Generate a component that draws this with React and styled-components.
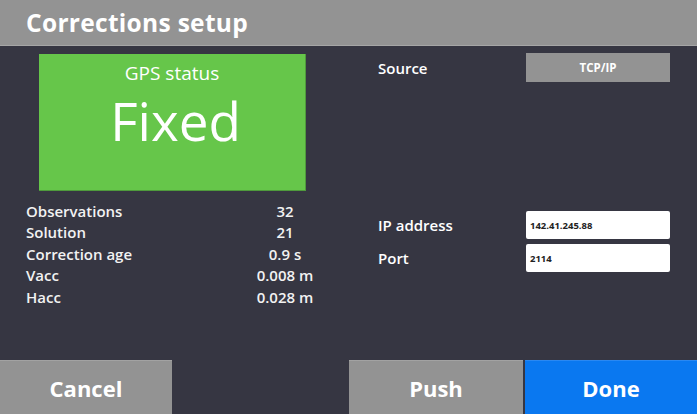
import styled, { createGlobalStyle } from "styled-components";

const GlobalStyle = createGlobalStyle`
  body {
    margin: 0;
    background: #363642;
    font-family: "Open Sans", "Noto Sans", Arial, sans-serif;
  }
`;

const Screen = styled.div`
  width: 697px;
  height: 414px;
  display: flex;
  flex-direction: column;
  background: #363642;
  color: #ffffff;
  overflow: hidden;
`;

const Header = styled.header`
  height: 45px;
  border-bottom: 1px solid #a6a6a6;
  background: #939393;
  display: flex;
  align-items: center;
  padding-left: 26px;
  font-size: 24.5px;
  font-weight: 700;
  letter-spacing: 0.3px;
`;

const Main = styled.main`
  flex: 1;
  display: flex;
`;

const LeftColumn = styled.section`
  width: 349px;
  display: flex;
  flex-direction: column;
`;

const StatusBox = styled.div`
  margin: 8px 0 0 39px;
  width: 266px;
  height: 136px;
  background: #66c64a;
  border-right: 1px solid #4f9a3c;
  border-bottom: 1px solid #4f9a3c;
  display: flex;
  flex-direction: column;
  align-items: center;
`;

const StatusTitle = styled.div`
  margin-top: 8px;
  font-size: 19px;
  line-height: 22px;
`;

const StatusValue = styled.div`
  font-size: 53px;
  line-height: 58px;
  margin-top: 8px;
  padding-left: 7px;
`;

const Stats = styled.div`
  margin: 9px 0 0 26px;
  display: grid;
  grid-template-columns: 224px 70px;
  grid-auto-rows: 21.5px;
  align-items: center;
  font-size: 15px;
  font-weight: 600;
  color: #f2f2f2;
`;

const StatValue = styled.span`
  text-align: center;
`;

const RightColumn = styled.section`
  flex: 1;
  display: flex;
  flex-direction: column;
  padding: 7px 0 0 29px;
`;

const FieldRow = styled.div`
  display: grid;
  grid-template-columns: 148px 144px;
  align-items: center;
  margin-top: ${(p) => p.$gap || 0}px;
`;

const Label = styled.span`
  font-size: 15px;
  font-weight: 600;
`;

const SourceButton = styled.div`
  height: 29px;
  background: #939393;
  display: flex;
  align-items: center;
  justify-content: center;
  font-size: 11.5px;
  font-weight: 700;
`;

const Input = styled.div`
  height: 28px;
  background: #ffffff;
  border-radius: 2px;
  display: flex;
  align-items: center;
  padding-left: 4px;
  color: #222;
  font-size: 9.5px;
  font-weight: 700;
`;

const Footer = styled.footer`
  height: 54px;
  display: flex;
`;

const FooterButton = styled.div`
  width: ${(p) => p.$width}px;
  margin-left: ${(p) => p.$offset || 0}px;
  background: ${(p) => (p.$primary ? "#0a78f0" : "#939393")};
  border-top: 1px solid ${(p) => (p.$primary ? "#2a88f2" : "#a2a2a2")};
  display: flex;
  align-items: center;
  justify-content: center;
  font-size: 22px;
  font-weight: 700;
`;

const stats = [
  ["Observations", "32"],
  ["Solution", "21"],
  ["Correction age", "0.9 s"],
  ["Vacc", "0.008 m"],
  ["Hacc", "0.028 m"],
];

export default function App() {
  return (
    <Screen>
      <GlobalStyle />
      <Header>Corrections setup</Header>
      <Main>
        <LeftColumn>
          <StatusBox>
            <StatusTitle>GPS status</StatusTitle>
            <StatusValue>Fixed</StatusValue>
          </StatusBox>
          <Stats>
            {stats.map(([label, value]) => [
              <span key={label}>{label}</span>,
              <StatValue key={label + "-v"}>{value}</StatValue>,
            ])}
          </Stats>
        </LeftColumn>
        <RightColumn>
          <FieldRow>
            <Label>Source</Label>
            <SourceButton>TCP/IP</SourceButton>
          </FieldRow>
          <FieldRow $gap={129}>
            <Label>IP address</Label>
            <Input>142.41.245.88</Input>
          </FieldRow>
          <FieldRow $gap={5}>
            <Label>Port</Label>
            <Input>2114</Input>
          </FieldRow>
        </RightColumn>
      </Main>
      <Footer>
        <FooterButton $width={172}>Cancel</FooterButton>
        <FooterButton $width={174} $offset={177}>Push</FooterButton>
        <FooterButton $width={172} $offset={2} $primary>Done</FooterButton>
      </Footer>
    </Screen>
  );
}
